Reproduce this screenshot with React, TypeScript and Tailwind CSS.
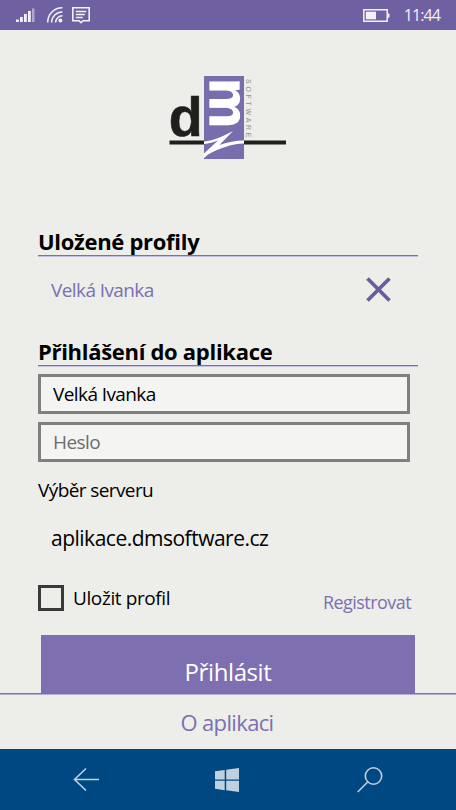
import React, { useState } from 'react';

const StatusBar: React.FC = () => (
  <div className="h-[30px] bg-[#6f61a1] flex items-center justify-between pl-4 pr-4 text-[#f4f1f9]">
    <div className="flex items-center">
      <svg width="19" height="15" viewBox="0 0 19 15" fill="currentColor">
        <rect x="0" y="11.5" width="2.8" height="2.5" />
        <rect x="4" y="9" width="2.8" height="5" />
        <rect x="8" y="6" width="2.8" height="8" />
        <rect x="12" y="3" width="2.8" height="11" />
        <rect x="16" y="0.5" width="2.5" height="13.5" opacity="0.5" />
      </svg>
      <svg className="ml-3" width="16" height="16" viewBox="0 0 16 16" fill="none" stroke="currentColor" strokeWidth="1.5">
        <path d="M.7 15.5A14.5 14.5 0 0 1 15.5 .8" />
        <path d="M4.6 15.5A10.5 10.5 0 0 1 15.5 5" />
        <path d="M8.6 15.5A7 7 0 0 1 15.5 8.8" />
        <circle cx="13.4" cy="13.6" r="2" fill="currentColor" stroke="none" />
      </svg>
      <svg className="ml-[9px]" width="18" height="18" viewBox="0 0 18 18" fill="none" stroke="currentColor" strokeWidth="1.6">
        <path d="M.8 1.7h16.4v13H11l-2 2-2-2H.8z" />
        <path d="M3.8 5.5h10.4M3.8 8.5h9M3.8 11.5h7" strokeWidth="1.3" />
      </svg>
    </div>
    <div className="flex items-center">
      <svg width="27" height="13" viewBox="0 0 27 13" fill="none" stroke="currentColor" strokeWidth="1.5">
        <path d="M.8 .8h23.4v11.4H.8z" />
        <path d="M2.8 2.7h10.2v7.6H2.8z" fill="currentColor" stroke="none" />
        <path d="M25.7 4.5v4" />
      </svg>
      <span className="ml-[14px] text-base tracking-[-0.9px]">11:44</span>
    </div>
  </div>
);

const Logo: React.FC = () => (
  <svg width="118" height="84" viewBox="169 76 118 84" className="block">
    <path d="M169.5 140.5h116.5v4h-116.5z" fill="#1f1f1d" />
    <path d="M204 76h40v83h-40z" fill="#796ead" />
    <text x="168.8" y="136" fontSize="55.5" fontWeight="700" fill="#1f1f1d" stroke="#1f1f1d" strokeWidth="0.6" fontFamily="Liberation Sans, sans-serif">d</text>
    <text transform="translate(209.5 78.3) rotate(90)" fontSize="56" fontWeight="700" fill="#fff" stroke="#fff" strokeWidth="1.2" fontFamily="Liberation Sans, sans-serif">m</text>
    <text transform="translate(246 79) rotate(90)" fontSize="7" textLength="58.5" fill="#8f8f8d" fontFamily="Liberation Sans, sans-serif">SOFTWARE</text>
    <path
      d="M204 141.5C214 140.5 224 136 233 131L219.5 145C228 142 236 140.5 244 140.5V143.5C231 144 219 148.5 208 154.5L204 158V153.5L218 140.500C213 142.500 209 143.5 204 144z"
      fill="#fff"
    />
  </svg>
);

const SectionTitle: React.FC<{ children: React.ReactNode }> = ({ children }) => (
  <h2 className="w-[380px] h-[30px] border-b border-[#7a6dbd] shadow-[0_1px_0_#c3bfdc] text-[22px] leading-[30px] font-bold tracking-[-0.3px] text-black">
    {children}
  </h2>
);

const App: React.FC = () => {
  const [name, setName] = useState('Velká Ivanka');
  const [password, setPassword] = useState('');
  const [saveProfile, setSaveProfile] = useState(false);

  return (
    <div className="w-[456px] h-[810px] flex flex-col overflow-hidden bg-[#edeee9] font-['Open_Sans','Noto_Sans',sans-serif]">
      <StatusBar />

      <main className="flex-1 min-h-0 overflow-hidden pl-[38px]">
        <div className="pt-[46px] pl-[131px]">
          <Logo />
        </div>

        <section className="mt-[66px]">
          <SectionTitle>Uložené profily</SectionTitle>
          <div className="h-[66px] pl-[13px] pr-[65px] flex items-center justify-between text-[#7c70b2]">
            <span className="mt-0.5 text-[19px] tracking-[-0.6px]">Velká Ivanka</span>
            <svg width="25" height="25" viewBox="0 0 25 25" stroke="#6a5ca0" strokeWidth="3.8">
              <path d="M1.5 1.5l22 22M23.5 1.5l-22 22" />
            </svg>
          </div>
        </section>

        <section className="mt-[14px]">
          <SectionTitle>Přihlášení do aplikace</SectionTitle>
          <div className="mt-2 w-[372px] flex flex-col gap-2 text-[19px] tracking-[-0.6px]">
            <input
              className="h-10 border-3 border-[#7f7f7e] bg-[#f4f4f2] pl-3 pb-px text-black outline-none"
              value={name}
              onChange={e => setName(e.target.value)}
            />
            <input
              type="password"
              placeholder="Heslo"
              className="h-10 border-3 border-[#7f7f7e] bg-[#f4f4f2] pl-3 pb-px placeholder:text-[#6d6d6b] outline-none"
              value={password}
              onChange={e => setPassword(e.target.value)}
            />
          </div>

          <div className="mt-[14px] text-[19px] leading-7 tracking-[-0.6px]">Výběr serveru</div>
          <div className="mt-[18px] pl-[13px] text-[21px] leading-8 tracking-[-0.5px]">aplikace.dmsoftware.cz</div>

          <div className="mt-[30px] h-7 w-[373px] flex items-center justify-between">
            <button className="flex items-center text-[19px] tracking-[-0.4px]" onClick={() => setSaveProfile(!saveProfile)}>
              <span className={`size-[26px] border-3 border-[#3a3a39] ${saveProfile ? 'bg-[#796ead]' : ''}`} />
              <span className="ml-[9px]">Uložit profil</span>
            </button>
            <a className="mt-2 text-[18px] tracking-[-0.55px] text-[#7c70b2]">Registrovat</a>
          </div>
        </section>

        <button className="mt-[23px] ml-[3px] w-[374px] h-[75px] pb-0.5 block bg-[#7e70b0] text-2xl tracking-[-0.4px] text-white">
          Přihlásit
        </button>
      </main>

      <footer className="h-14 border-t border-[#7a6dbd] shadow-[inset_0_1px_0_#b5afd4] flex items-center justify-center pt-0.5 text-[22px] tracking-[-0.65px] text-[#7c70b2]">
        <span className="-ml-0.5">O aplikaci</span>
      </footer>

      <nav className="h-[61px] bg-[#004882] text-[#bfd1e0] flex items-center">
        <svg className="ml-[73px]" width="27" height="25" viewBox="0 0 27 25" fill="none" stroke="currentColor" strokeWidth="1.6">
          <path d="M26 12.5H1.5M13 1.5l-11.5 11 11.5 11" />
        </svg>
        <svg className="ml-[115px]" width="24" height="24" viewBox="0 0 24 24" fill="currentColor">
          <path d="M0 3.3l9.7-1.4v9.5H0zM11.2 1.7L24 0v11.4H11.2zM0 12.7h9.7v9.5L0 20.8zM11.2 12.7H24V24l-12.8-1.8z" />
        </svg>
        <svg className="ml-[118px]" width="26" height="26" viewBox="0 0 26 26" fill="none" stroke="currentColor" strokeWidth="1.6">
          <circle cx="16.5" cy="9" r="8.2" />
          <path d="M10.7 15L.7 25" />
        </svg>
      </nav>
    </div>
  );
};

export default App;
